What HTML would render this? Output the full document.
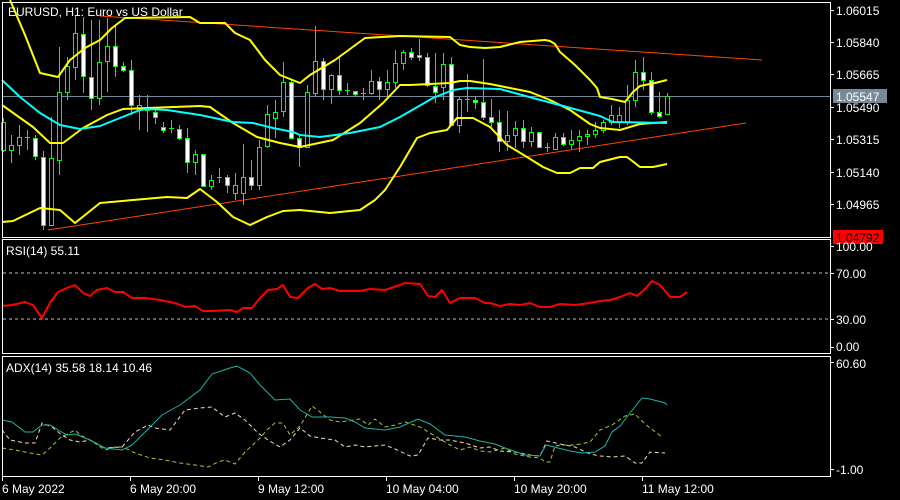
<!DOCTYPE html>
<html><head><meta charset="utf-8"><style>
html,body{margin:0;padding:0;background:#000;width:900px;height:500px;overflow:hidden}
svg{display:block}
text{font-family:"Liberation Sans","DejaVu Sans",sans-serif;font-size:12px;fill:#fff}
</style></head><body>
<svg width="900" height="500" viewBox="0 0 900 500" xmlns="http://www.w3.org/2000/svg">
<rect width="900" height="500" fill="#000"/>
<line x1="2" y1="96.5" x2="830" y2="96.5" stroke="#778899" stroke-width="1"/>
<line x1="100" y1="16" x2="762" y2="60" stroke="#ff4500" stroke-width="1"/>
<line x1="48" y1="230" x2="746" y2="123" stroke="#ff4500" stroke-width="1"/>
<path fill="none" stroke="#00ff00" stroke-width="1" d="M3.5 118V152M11.5 135V163M19.5 125V155M27.5 130V150M35.5 135V160M43.5 151V230M51.5 117V175M59.5 47V175M67.5 57V100M75.5 15V80M83.5 17V93M91.5 20V110M99.5 20V105M107.5 18V92M115.5 25V77M123.5 62V72M131.5 60V115M139.5 95V130M147.5 95V132M155.5 108V124M163.5 122V133M171.5 120V133M179.5 125V140M187.5 128V173M195.5 150V175M203.5 154V186M211.5 175V190M219.5 168V183M227.5 175V193M235.5 173V200M243.5 144V205M251.5 160V190M259.5 140V190M267.5 105V148M275.5 100V138M283.5 62V117M291.5 80V138M299.5 135V167M307.5 85V148M315.5 26V97M323.5 58V100M331.5 74V104M339.5 57V95M347.5 83V95M355.5 91V97M363.5 88V100M371.5 70V95M379.5 77V100M387.5 70V97M395.5 50V88M403.5 50V70M411.5 48V60M419.5 39V61M427.5 53V87M435.5 53V103M443.5 53V100M451.5 57V125M459.5 97V133M467.5 74V112M475.5 96V109M483.5 59V120M491.5 99V130M499.5 110V152M507.5 111V151M515.5 121V148M523.5 120V148M531.5 127V147M539.5 132V147M547.5 143V152M555.5 133V150M563.5 133V146M571.5 130V149M579.5 130V152M587.5 130V145M595.5 122V138M603.5 120V133M611.5 105V125M619.5 107V128M627.5 85V125M635.5 60V107M643.5 57V90M651.5 72V115M659.5 92V118M667.5 93V115 M25 137.5H30M145 110.5H150M169 128.5H174M217 177.5H222M345 90.5H350M361 93.5H366M465 99.5H470M545 147.5H550"/>
<g fill="#000" stroke="#00ff00" stroke-width="1">
<rect x="1.5" y="122.5" width="4" height="28"/><rect x="9.5" y="145.5" width="4" height="5"/><rect x="17.5" y="137.5" width="4" height="8"/><rect x="49.5" y="158.5" width="4" height="67"/><rect x="57.5" y="92.5" width="4" height="68"/><rect x="65.5" y="66.5" width="4" height="26"/><rect x="73.5" y="33.5" width="4" height="34"/><rect x="97.5" y="62.5" width="4" height="36"/><rect x="105.5" y="46.5" width="4" height="15"/><rect x="137.5" y="105.5" width="4" height="5"/><rect x="193.5" y="154.5" width="4" height="8"/><rect x="209.5" y="180.5" width="4" height="6"/><rect x="233.5" y="185.5" width="4" height="8"/><rect x="241.5" y="177.5" width="4" height="16"/><rect x="257.5" y="147.5" width="4" height="38"/><rect x="265.5" y="114.5" width="4" height="32"/><rect x="273.5" y="112.5" width="4" height="6"/><rect x="281.5" y="82.5" width="4" height="29"/><rect x="305.5" y="92.5" width="4" height="55"/><rect x="313.5" y="61.5" width="4" height="32"/><rect x="329.5" y="75.5" width="4" height="14"/><rect x="369.5" y="81.5" width="4" height="12"/><rect x="385.5" y="82.5" width="4" height="7"/><rect x="393.5" y="63.5" width="4" height="19"/><rect x="401.5" y="52.5" width="4" height="11"/><rect x="441.5" y="64.5" width="4" height="23"/><rect x="457.5" y="99.5" width="4" height="26"/><rect x="505.5" y="135.5" width="4" height="6"/><rect x="513.5" y="128.5" width="4" height="7"/><rect x="529.5" y="132.5" width="4" height="9"/><rect x="553.5" y="137.5" width="4" height="12"/><rect x="569.5" y="140.5" width="4" height="4"/><rect x="577.5" y="136.5" width="4" height="4"/><rect x="585.5" y="134.5" width="4" height="2"/><rect x="593.5" y="130.5" width="4" height="4"/><rect x="601.5" y="122.5" width="4" height="8"/><rect x="609.5" y="115.5" width="4" height="7"/><rect x="617.5" y="115.5" width="4" height="7"/><rect x="625.5" y="100.5" width="4" height="22"/><rect x="633.5" y="72.5" width="4" height="28"/><rect x="665.5" y="96.5" width="4" height="18"/>
</g>
<g fill="#fff" stroke="#00ff00" stroke-width="1">
<rect x="33.5" y="138.5" width="4" height="18"/><rect x="41.5" y="157.5" width="4" height="68"/><rect x="81.5" y="34.5" width="4" height="42"/><rect x="89.5" y="77.5" width="4" height="21"/><rect x="113.5" y="46.5" width="4" height="20"/><rect x="121.5" y="66.5" width="4" height="4"/><rect x="129.5" y="70.5" width="4" height="35"/><rect x="153.5" y="112.5" width="4" height="5"/><rect x="161.5" y="127.5" width="4" height="3"/><rect x="177.5" y="129.5" width="4" height="9"/><rect x="185.5" y="138.5" width="4" height="24"/><rect x="201.5" y="154.5" width="4" height="32"/><rect x="225.5" y="177.5" width="4" height="8"/><rect x="249.5" y="177.5" width="4" height="8"/><rect x="289.5" y="82.5" width="4" height="56"/><rect x="297.5" y="138.5" width="4" height="9"/><rect x="321.5" y="61.5" width="4" height="28"/><rect x="337.5" y="75.5" width="4" height="15"/><rect x="353.5" y="91.5" width="4" height="3"/><rect x="377.5" y="81.5" width="4" height="8"/><rect x="409.5" y="52.5" width="4" height="5"/><rect x="417.5" y="55.5" width="4" height="2"/><rect x="425.5" y="57.5" width="4" height="28"/><rect x="433.5" y="86.5" width="4" height="6"/><rect x="449.5" y="64.5" width="4" height="61"/><rect x="473.5" y="100.5" width="4" height="2"/><rect x="481.5" y="102.5" width="4" height="15"/><rect x="489.5" y="117.5" width="4" height="5"/><rect x="497.5" y="122.5" width="4" height="19"/><rect x="521.5" y="128.5" width="4" height="13"/><rect x="537.5" y="132.5" width="4" height="15"/><rect x="561.5" y="137.5" width="4" height="7"/><rect x="641.5" y="72.5" width="4" height="8"/><rect x="649.5" y="80.5" width="4" height="32"/><rect x="657.5" y="112.5" width="4" height="4"/>
</g>
<g fill="none" stroke-width="2" stroke-linejoin="round">
<polyline stroke="#ffff00" points="10,0 25,35 40,73 58,77 70,60 85,48 100,40 112,28 125,18 190,17 200,23 225,23 235,33 250,40 265,60 280,75 300,83 310,75 335,60 365,38 400,36 450,37 460,45 470,47 485,48 500,47 520,42 545,40 550,41 555,44 560,52 575,65 590,80 597,88 600,97 612,99 625,102 633,92 640,86 655,83 667,80"/>
<polyline stroke="#ffff00" points="2,105 33,127 50,143 63,143 83,128 107,115 123,109 147,108 200,106 210,107 233,123 257,137 280,143 300,147 333,140 360,123 383,103 400,85 410,85 450,83 460,81 470,81 490,84 530,92 550,100 570,110 590,124 600,128 620,130 640,124 667,122"/>
<polyline stroke="#ffff00" points="2,222 13,221 40,208 60,210 75,223 100,203 133,200 167,197 187,198 200,189 217,202 233,217 250,225 267,217 283,211 300,210 330,213 360,210 375,200 385,190 400,167 417,138 430,133 447,130 457,118 473,118 490,127 507,145 527,157 543,167 557,173 570,173 580,168 593,168 600,162 620,157 627,157 640,167 653,167 667,164"/>
<polyline stroke="#00ffff" points="2,80 20,97 40,113 60,125 80,129 100,126 120,118 140,110 147,109 167,110 200,115 233,122 253,123 273,128 293,132 300,135 320,137 350,133 380,127 400,117 433,98 453,90 467,88 500,89 533,98 567,107 600,116 613,122 667,123"/>
</g>
<line x1="3" y1="273" x2="830" y2="273" stroke="#c0c0c0" stroke-dasharray="3,3"/>
<line x1="3" y1="319" x2="830" y2="319" stroke="#c0c0c0" stroke-dasharray="3,3"/>
<polyline fill="none" stroke="#ff0000" stroke-width="2" stroke-linejoin="round" points="2,306 12,305 25,302 33,305 42,318 50,303 58,292 67,288 75,285 83,293 90,296 97,290 107,288 115,292 123,292 132,298 145,298 160,300 170,302 178,304 185,307 195,306 203,311 212,311 230,310 237,312 243,308 252,308 260,298 268,290 277,289 283,285 290,297 298,298 308,288 315,284 322,289 330,288 340,291 360,291 370,289 385,290 400,285 405,283 420,284 428,296 435,297 442,290 450,303 460,298 475,298 485,303 490,303 500,306 510,304 520,305 530,303 540,307 550,307 560,304 575,305 590,303 600,301 610,300 620,297 630,293 637,296 645,289 652,281 660,285 670,297 680,297 687,292"/>
<g fill="none" stroke-width="1">
<polyline stroke="#9acd32" stroke-dasharray="4,3" points="2,448 15,450 30,453 42,455 50,448 60,438 75,430 80,435 90,440 105,450 115,447 123,447 135,453 150,458 165,460 180,463 195,465 208,467 218,462 225,460 235,464 245,452 258,440 268,429 275,423 283,423 290,435 300,426 312,406 320,412 330,420 340,422 360,419 368,425 375,419 385,427 395,425 405,422 420,427 450,445 460,450 470,447 480,451 490,452 505,448 515,454 530,457 540,458 545,462 550,462 555,446 565,445 575,445 590,442 600,430 612,425 625,416 635,414 645,424 662,437"/>
<polyline stroke="#f5deb3" stroke-dasharray="4,3" points="2,430 10,440 25,443 35,443 42,423 52,427 62,435 70,440 80,442 90,440 105,448 122,447 135,432 148,425 155,428 170,430 185,410 200,408 212,407 225,417 235,413 245,420 258,433 268,440 280,447 290,440 300,428 310,436 320,438 335,440 345,447 355,445 365,447 385,445 395,449 410,456 418,455 428,438 440,440 450,440 465,443 480,448 490,447 500,451 515,452 530,455 540,456 547,441 560,444 575,447 590,454 600,456 612,457 625,456 635,463 642,463 650,452 665,453"/>
<polyline stroke="#20b2aa" points="2,420 12,422 25,432 33,432 42,425 50,425 60,431 67,435 75,434 90,440 105,448 122,450 132,445 145,432 162,415 180,405 200,390 212,374 230,368 237,366 250,373 260,385 275,400 290,399 300,410 312,417 330,417 345,418 355,422 365,428 385,430 400,427 418,419 430,424 445,435 465,437 480,441 495,444 505,448 525,455 540,456 546,445 558,448 570,451 582,453 595,452 605,446 612,432 620,426 630,413 642,398 650,399 665,403 667,405"/>
</g>
<g fill="none" stroke="#fff" stroke-width="1">
<rect x="2.5" y="2.5" width="828" height="235"/>
<rect x="2.5" y="239.5" width="828" height="114"/>
<rect x="2.5" y="356.5" width="828" height="120"/>
<path d="M830 10.5H834M830 42.5H834M830 74.5H834M830 107.5H834M830 139.5H834M830 172.5H834M830 204.5H834M830 246.5H834M830 273.5H834M830 319.5H834M830 347.5H834M830 362.5H834M830 469.5H834M2.5 476V481M130.5 476V481M258.5 476V481M386.5 476V481M514.5 476V481M642.5 476V481"/>
</g>
<rect x="833" y="89" width="54" height="14" fill="#778899"/>
<rect x="833" y="230" width="50" height="14" fill="#ff0000"/>
<text x="836" y="15">1.06015</text>
<text x="836" y="47">1.05840</text>
<text x="836" y="79">1.05665</text>
<text x="836" y="112">1.05490</text>
<text x="836" y="144">1.05315</text>
<text x="836" y="177">1.05140</text>
<text x="836" y="209">1.04965</text>
<text x="836" y="101">1.05547</text>
<text x="836" y="242" style="fill:#000">1.04792</text>
<text x="836" y="251">100.00</text>
<text x="836" y="278">70.00</text>
<text x="836" y="324">30.00</text>
<text x="836" y="351">0.00</text>
<text x="836" y="368">60.60</text>
<text x="836" y="474">-1.00</text>
<text x="8" y="16">EURUSD, H1:  Euro vs US Dollar</text>
<text x="6" y="255">RSI(14) 55.11</text>
<text x="6" y="372">ADX(14) 35.58 18.14 10.46</text>
<text x="2" y="493">6 May 2022</text>
<text x="130" y="493">6 May 20:00</text>
<text x="258" y="493">9 May 12:00</text>
<text x="386" y="493">10 May 04:00</text>
<text x="514" y="493">10 May 20:00</text>
<text x="642" y="493">11 May 12:00</text>
</svg>
</body></html>
